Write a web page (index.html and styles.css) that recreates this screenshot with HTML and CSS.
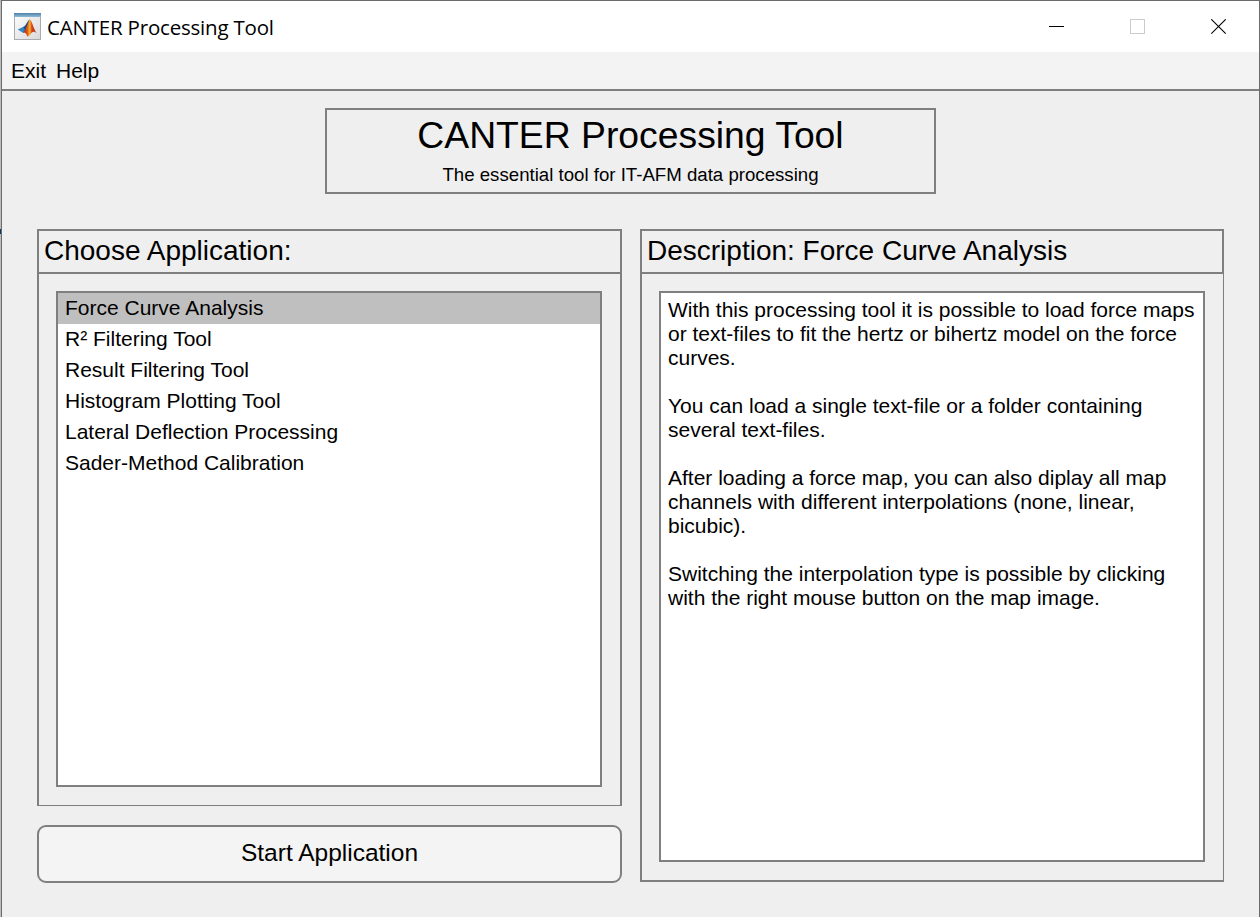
FILE: index.html
```html
<!DOCTYPE html>
<html lang="en">
<head>
<meta charset="utf-8">
<title>CANTER Processing Tool</title>
<link rel="stylesheet" href="styles.css">
</head>
<body>
<div class="window">
  <header class="titlebar">
    <svg class="app-icon" width="27" height="27" viewBox="0 0 27 27">
      <defs>
        <linearGradient id="bar" x1="0" y1="0" x2="0" y2="1"><stop offset="0" stop-color="#4f7fa6"/><stop offset="1" stop-color="#8fbbd8"/></linearGradient>
        <linearGradient id="paper" x1="0" y1="0" x2="1" y2="1"><stop offset="0" stop-color="#fdfdfd"/><stop offset="1" stop-color="#d9d9dc"/></linearGradient>
        <linearGradient id="peak" x1="0" y1="0" x2="1" y2="0"><stop offset="0" stop-color="#8c1d12"/><stop offset=".35" stop-color="#e05a16"/><stop offset=".52" stop-color="#f8b62c"/><stop offset=".66" stop-color="#d9481a"/><stop offset="1" stop-color="#a5200e"/></linearGradient>
      </defs>
      <rect x=".5" y=".5" width="26" height="26" fill="url(#paper)" stroke="#a9abad"/>
      <rect x="0" y="0" width="27" height="4" fill="url(#bar)"/>
      <path d="M3.800 16.500 L9.500 13.800 L12.500 16 L9.300 20 Z" fill="#2f86c8"/>
      <path d="M9.200 14 C11.500 13.500 12.500 9.500 15.600 6.300 L14.200 13 L11.500 18.500 Z" fill="#244f80"/>
      <path d="M8.500 19.700 C12 17.500 13.300 11 15.800 6.200 C18 7.500 19 14.500 22.500 20.200 C20 17.800 18.500 18.500 17 20.500 C15.800 22.200 14.800 23.300 13.300 23.600 C12.500 21.200 11.500 19 8.500 19.700 Z" fill="url(#peak)"/>
    </svg>
    <span class="window-title">CANTER Processing Tool</span>
    <div class="controls">
      <svg width="16" height="16" viewBox="0 0 16 16" shape-rendering="crispEdges"><rect x="0" y="7" width="15" height="1" fill="#000"/></svg>
      <svg width="16" height="16" viewBox="0 0 16 16"><rect x=".5" y=".5" width="14" height="14" fill="none" stroke="#ccc"/></svg>
      <svg width="16" height="16" viewBox="0 0 16 16"><path d="M.3 .3 L14.700 14.700 M14.700 .3 L.3 14.700" stroke="#000" stroke-width="1.100"/></svg>
    </div>
  </header>
  <nav class="menubar"><span>Exit</span><span>Help</span></nav>
  <main class="content">
    <section class="banner">
      <h1>CANTER Processing Tool</h1>
      <p>The essential tool for IT-AFM data processing</p>
    </section>
    <div class="columns">
      <div class="left">
        <section class="panel chooser">
          <h2>Choose Application:</h2>
          <ul class="list">
            <li class="selected">Force Curve Analysis</li>
            <li>R² Filtering Tool</li>
            <li>Result Filtering Tool</li>
            <li>Histogram Plotting Tool</li>
            <li>Lateral Deflection Processing</li>
            <li>Sader-Method Calibration</li>
          </ul>
        </section>
        <button class="start">Start Application</button>
      </div>
      <section class="panel description">
        <h2>Description: Force Curve Analysis</h2>
        <div class="text">
          <p>With this processing tool it is possible to load force maps<br>or text-files to fit the hertz or bihertz model on the force<br>curves.</p>
          <p>You can load a single text-file or a folder containing<br>several text-files.</p>
          <p>After loading a force map, you can also diplay all map<br>channels with different interpolations (none, linear,<br>bicubic).</p>
          <p>Switching the interpolation type is possible by clicking<br>with the right mouse button on the map image.</p>
        </div>
      </section>
    </div>
  </main>
</div>
</body>
</html>
```
FILE: styles.css
```css
* { box-sizing: border-box; }
body {
  margin: 0;
  padding-left: 1px;
  height: 917px;
  overflow: hidden;
  background: linear-gradient(#bdbdbd 229px, #0b3a66 229px, #0b3a66 234px, #bdbdbd 234px);
  font-family: "Liberation Sans", Arial, sans-serif;
  color: #000;
}
h1, h2, p, ul { margin: 0; padding: 0; font-weight: normal; }
.window {
  height: 917px;
  display: flex;
  flex-direction: column;
  border: 1px solid #6b6b6b;
  border-bottom: 0;
  background: #efefef;
}
.titlebar {
  height: 51px;
  flex: none;
  display: flex;
  align-items: center;
  padding-left: 12px;
  background: #fff;
}
.window-title {
  margin-left: 6px;
  font: 20.500px "Open Sans", sans-serif;
  letter-spacing: -0.2px;
  white-space: nowrap;
}
.controls { display: flex; gap: 65px; margin: 0 32px 0 auto; }
.controls svg { display: block; }
.menubar {
  height: 39px;
  flex: none;
  display: flex;
  gap: 10px;
  padding-left: 9px;
  background: #f3f3f3;
  border-bottom: 2px solid #7f7f7f;
  font-size: 21px;
  line-height: 38px;
}
.content { padding: 17px 35px 0; }
.banner {
  width: 611px;
  height: 86px;
  margin-left: 288px;
  padding-top: 3px;
  border: 2px solid #7f7f7f;
  text-align: center;
  white-space: nowrap;
}
.banner h1 { font-size: 37.3px; line-height: 44px; }
.banner p { font-size: 18.650px; line-height: 24px; margin-top: 6px; }
.columns { display: flex; gap: 18px; margin-top: 35px; }
.left { width: 585px; display: flex; flex-direction: column; gap: 19px; }
.panel {
  background: linear-gradient(#7f7f7f, #7f7f7f) 0 0 / 2px 100% no-repeat;
  display: flex;
  flex-direction: column;
}
.panel h2 {
  height: 45px;
  flex: none;
  border: 2px solid #7f7f7f;
  padding-left: 5px;
  font-size: 28px;
  line-height: 39px;
  white-space: nowrap;
}
.chooser {
  height: 577px;
  border-right: 2px solid #7f7f7f;
  border-bottom: 1px solid #7f7f7f;
}
.chooser h2 { border-right: 0; }
.description {
  width: 584px;
  height: 653px;
  border-bottom: 2px solid #7f7f7f;
  border-right: 1px solid #7f7f7f;
}
.description h2 { border-right-width: 1px; }
.list, .text {
  flex: 1;
  border: 2px solid #7f7f7f;
  background: #fff;
  font-size: 21px;
}
.list { list-style: none; margin: 17px 18px 18px 19px; }
.list li { height: 31px; line-height: 30px; padding-left: 7px; }
.list .selected { background: #bfbfbf; }
.text {
  margin: 17px 18px 18px 19px;
  padding: 5px 0 0 7px;
  line-height: 24px;
  white-space: nowrap;
}
.text p + p { margin-top: 24px; }
.start {
  height: 58px;
  padding: 0 0 3px;
  border: 2px solid #7f7f7f;
  border-radius: 9px;
  background: #f4f4f4;
  color: #000;
  font: 24.500px "Liberation Sans", Arial, sans-serif;
}
```
